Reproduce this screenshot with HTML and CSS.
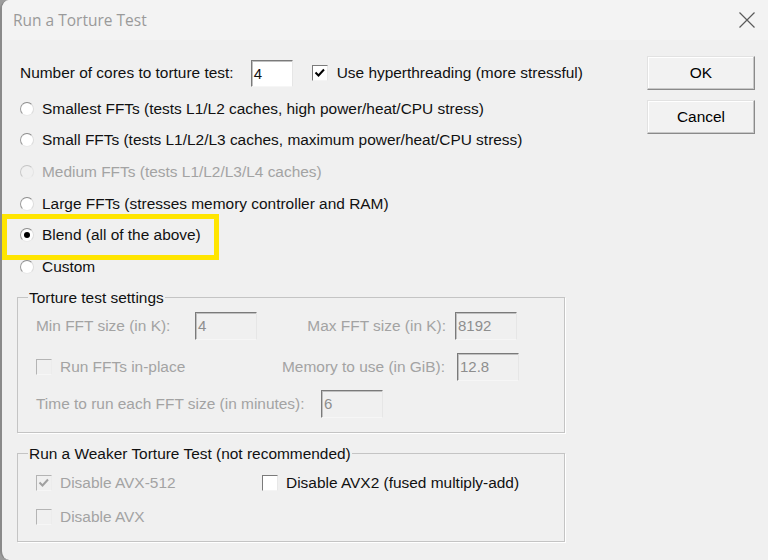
FILE: index.html
```html
<!DOCTYPE html>
<html>
<head>
<meta charset="utf-8">
<title>Run a Torture Test</title>
<link rel="stylesheet" href="styles.css">
</head>
<body>
<div class="window">
  <div class="titlebar">
    <span class="title">Run a Torture Test</span>
    <svg class="close" width="16" height="16" viewBox="0 0 16 16"><path d="M0.5 0.5 L15.5 15.5 M15.5 0.5 L0.5 15.5" stroke="#5a5a5a" stroke-width="1.2" fill="none"/></svg>
  </div>
  <div class="client">
    <div class="main">
      <div class="row cores">
        <span class="lbl">Number of cores to torture test:</span>
        <span class="edit cores-edit">4</span>
        <span class="check"><svg viewBox="0 0 16 16" width="16" height="16"><path d="M3.5 7.5 L6.5 10.5 L12 4.5" stroke="#000" stroke-width="2" fill="none"/></svg></span>
        <span class="lbl">Use hyperthreading (more stressful)</span>
      </div>
      <div class="row radio-row"><span class="radio"></span><span class="lbl">Smallest FFTs (tests L1/L2 caches, high power/heat/CPU stress)</span></div>
      <div class="row radio-row"><span class="radio"></span><span class="lbl">Small FFTs (tests L1/L2/L3 caches, maximum power/heat/CPU stress)</span></div>
      <div class="row radio-row disabled"><span class="radio"></span><span class="lbl">Medium FFTs (tests L1/L2/L3/L4 caches)</span></div>
      <div class="row radio-row"><span class="radio"></span><span class="lbl">Large FFTs (stresses memory controller and RAM)</span></div>
      <div class="row radio-row highlighted"><span class="radio on"></span><span class="lbl">Blend (all of the above)</span></div>
      <div class="row radio-row"><span class="radio"></span><span class="lbl">Custom</span></div>

      <fieldset class="group settings">
        <legend>Torture test settings</legend>
        <div class="grow g1">
          <span class="lbl dis w-left">Min FFT size (in K):</span>
          <span class="edit dis-edit">4</span>
          <span class="lbl dis right-lbl">Max FFT size (in K):</span>
          <span class="edit dis-edit">8192</span>
        </div>
        <div class="grow g2">
          <span class="check dis-check"></span>
          <span class="lbl dis">Run FFTs in-place</span>
          <span class="lbl dis right-lbl mem">Memory to use (in GiB):</span>
          <span class="edit dis-edit">12.8</span>
        </div>
        <div class="grow g3">
          <span class="lbl dis w-time">Time to run each FFT size (in minutes):</span>
          <span class="edit dis-edit">6</span>
        </div>
      </fieldset>

      <fieldset class="group weaker">
        <legend>Run a Weaker Torture Test (not recommended)</legend>
        <div class="grow w1">
          <span class="chk-item w-avx512">
            <span class="check dis-check"><svg viewBox="0 0 16 16" width="16" height="16"><path d="M3.5 7.5 L6.5 10.5 L12 4.5" stroke="#a0a0a0" stroke-width="2" fill="none"/></svg></span>
            <span class="lbl dis">Disable AVX-512</span>
          </span>
          <span class="chk-item">
            <span class="check"></span>
            <span class="lbl">Disable AVX2 (fused multiply-add)</span>
          </span>
        </div>
        <div class="grow w2">
          <span class="chk-item">
            <span class="check dis-check"></span>
            <span class="lbl dis">Disable AVX</span>
          </span>
        </div>
      </fieldset>
    </div>
    <div class="buttons">
      <button class="btn">OK</button>
      <button class="btn">Cancel</button>
    </div>
  </div>
</div>
</body>
</html>
```

FILE: styles.css
```css
html, body {
  margin: 0;
  padding: 0;
  background: #9c9c9c;
}
body {
  width: 768px;
  height: 560px;
  overflow: hidden;
  font-family: "Liberation Sans", Arial, sans-serif;
  font-size: 15.45px;
  color: #111;
}
.window {
  width: 780px;
  height: 560px;
  background: #f0f0f0;
  border-left: 2px solid #8a8a8a;
  border-top-left-radius: 9px;
  border-bottom-left-radius: 9px;
  box-sizing: border-box;
  overflow: hidden;
}
.titlebar {
  height: 40px;
  display: flex;
  align-items: center;
  justify-content: space-between;
  padding: 0 25px 0 11px;
  background: #f3f3f3;
  box-sizing: border-box;
}
.title {
  font-family: "Open Sans", "Noto Sans", sans-serif;
  font-size: 15.5px;
  color: #9a9a9a;
  margin-top: -1px;
}
.close {
  margin-top: -1px;
}
.client {
  display: flex;
}
.main {
  width: 600px;
  padding-left: 18px;
  padding-top: 17px;
}
.row {
  display: flex;
  align-items: center;
}
.cores {
  height: 32px;
  margin-bottom: 4px;
}
.cores-edit {
  margin-left: 17px;
  width: 42px;
  height: 27px;
  margin-right: 19px;
}
.cores .check {
  margin-right: 9px;
}
.radio-row {
  height: 31.6px;
  position: relative;
}
.radio {
  width: 14px;
  height: 14px;
  border-radius: 50%;
  box-sizing: border-box;
  border: 1px solid;
  border-color: #8c8c8c #dcdcdc #e8e8e8 #9a9a9a;
  background: #fff;
  margin-right: 8px;
  position: relative;
  flex: none;
}
.radio.on::after {
  content: "";
  position: absolute;
  left: 3px;
  top: 3px;
  width: 6px;
  height: 6px;
  border-radius: 50%;
  background: #000;
}
.disabled .radio {
  background: #f0f0f0;
  border-color: #c4c4c4 #e4e4e4 #ececec #c8c8c8;
}
.disabled .lbl {
  color: #a3a3a3;
}
.highlighted::after {
  content: "";
  position: absolute;
  left: -18px;
  top: -5px;
  width: 217px;
  height: 46px;
  border: 5px solid #ffe500;
  box-sizing: border-box;
}
.lbl {
  white-space: nowrap;
}
.dis {
  color: #a3a3a3;
}
.edit {
  display: inline-flex;
  align-items: center;
  box-sizing: border-box;
  background: #fff;
  border: 1px solid;
  border-color: #7a7a7a #e6e6e6 #f6f6f6 #7a7a7a;
  box-shadow: inset 1px 1px 0 #c0c0c0;
  padding-left: 2px;
  font-size: 15px;
  flex: none;
}
.dis-edit {
  background: #f0f0f0;
  color: #8e8e8e;
  width: 62px;
  height: 28px;
}
.check {
  width: 16px;
  height: 16px;
  box-sizing: border-box;
  background: #fff;
  border: 1px solid;
  border-color: #7a7a7a #e8e8e8 #f4f4f4 #7a7a7a;
  flex: none;
  display: inline-flex;
  align-items: center;
  justify-content: center;
  position: relative;
}
.check svg {
  position: absolute;
  left: -1px;
  top: -1px;
}
.dis-check {
  background: #f0f0f0;
  border-color: #b4b4b4 #ececec #f6f6f6 #b4b4b4;
}
.group {
  margin: 6px 0 0 -3px;
  width: 548px;
  min-width: 0;
  box-sizing: border-box;
  border: 1px solid #c4c4c4;
  box-shadow: 1px 1px 0 #fff;
  padding: 0 0 0 18px;
}
.group legend {
  padding: 0 1px 0 1px;
  margin-left: -8px;
  line-height: 17px;
  white-space: nowrap;
}
.settings {
  height: 144px;
}
.grow {
  display: flex;
  align-items: center;
}
.g1 {
  margin-top: 6px;
  height: 28px;
}
.w-left {
  width: 159px;
}
.right-lbl {
  width: 189px;
  text-align: right;
  margin-right: 9px;
}
.g2 {
  margin-top: 13px;
  height: 28px;
}
.g2 .check {
  margin-right: 8px;
}
.mem {
  margin-left: auto;
  width: 200px;
  margin-right: 12px;
}
.g2 .dis-edit {
  margin-right: 45px;
}
.g3 {
  margin-top: 9px;
  height: 28px;
}
.w-time {
  width: 285px;
}
.weaker {
  height: 97px;
  margin-top: 12px;
}
.w1 {
  margin-top: 6px;
  height: 30px;
}
.w2 {
  margin-top: 4px;
  height: 30px;
}
.chk-item {
  display: inline-flex;
  align-items: center;
}
.chk-item .check {
  margin-right: 8px;
}
.w-avx512 {
  width: 226px;
}
.buttons {
  display: flex;
  flex-direction: column;
  gap: 10px;
  margin-left: 27px;
  padding-top: 16px;
}
.btn {
  width: 108px;
  height: 34px;
  font-family: "Liberation Sans", Arial, sans-serif;
  font-size: 15.45px;
  color: #000;
  background: #f2f2f2;
  border: 1px solid;
  border-color: #e2e2e2 #8a8a8a #8a8a8a #e2e2e2;
  box-shadow: inset -1px -1px 0 #c8c8c8, inset 1px 1px 0 #fff;
  padding: 0;
}
```
